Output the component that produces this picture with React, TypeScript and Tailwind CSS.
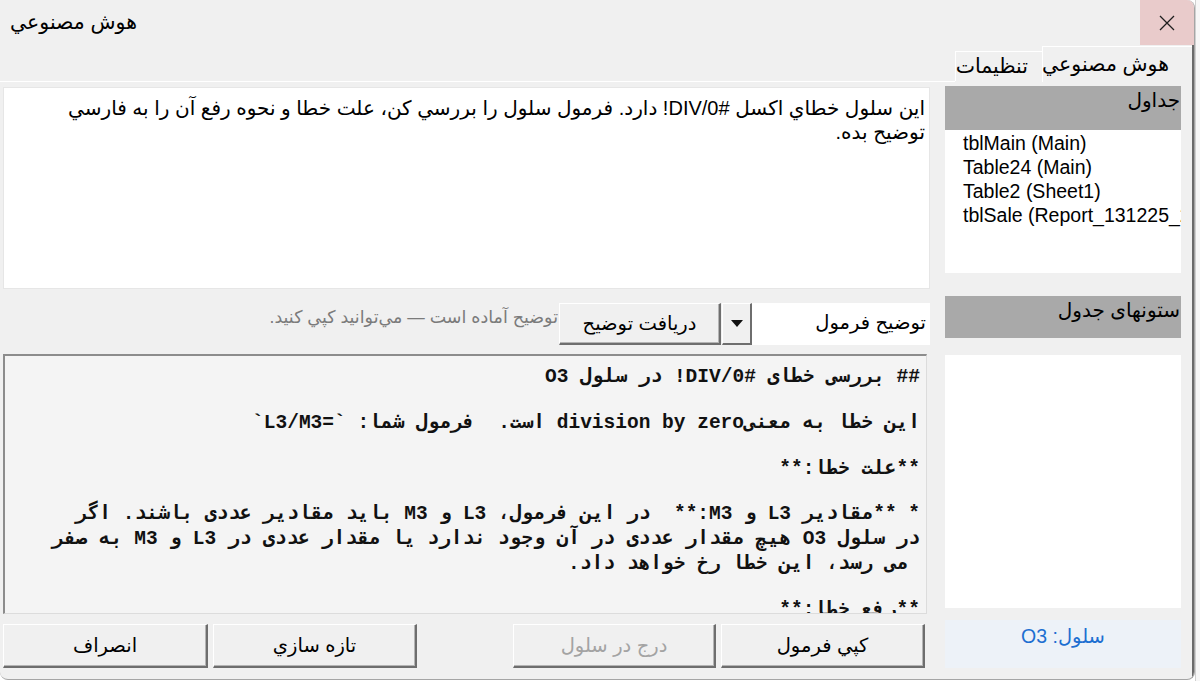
import React from "react";

const SANS = "font-['Liberation_Sans','DejaVu_Sans',sans-serif]";
const MONO = "font-['Liberation_Mono','DejaVu_Sans_Mono',monospace]";

const tables = [
  "tblMain (Main)",
  "Table24 (Main)",
  "Table2 (Sheet1)",
  "tblSale (Report_131225_2025)",
];

// matn-e khorooji, khat be khat (khat-e khali = "")
const output = [
  "## بررسی خطای #DIV/0! در سلول O3",
  "",
  "این خطا به معنیdivision by zero است.  فرمول شما: `=L3/M3`",
  "",
  "**علت خطا:**",
  "",
  "* **مقادیر L3 و M3:**  در این فرمول، L3 و M3 باید مقادیر عددی باشند. اگر",
  "در سلول O3 هیچ مقدار عددی در آن وجود ندارد یا مقدار عددی در L3 و M3 به صفر",
  " می رسد، این خطا رخ خواهد داد.",
  "",
  "**رفع خطا:**",
];

function Btn({
  label,
  disabled = false,
  className = "",
}: {
  label: string;
  disabled?: boolean;
  className?: string;
}) {
  return (
    <button
      dir="rtl"
      className={`flex items-center justify-center bg-[#f0f0f0] border-t border-l border-t-white border-l-white border-r-2 border-b-2 border-r-[#6e6e6e] border-b-[#6e6e6e] shadow-[inset_-1px_-1px_0_#b4b4b4] text-[19.5px] ${
        disabled ? "text-[#a3a3a3]" : "text-black"
      } ${className}`}
    >
      {label}
    </button>
  );
}

function CloseIcon() {
  return (
    <svg width="18" height="18" viewBox="0 0 18 18" fill="none">
      <path d="M2 2 L16 16 M16 2 L2 16" stroke="#1f1f1f" strokeWidth="1.3" />
    </svg>
  );
}

export default function App() {
  return (
    <div className={`w-[1200px] h-[681px] flex bg-white overflow-hidden ${SANS}`}>
      <div className="w-[1195px] h-[680px] shrink-0 flex flex-col bg-[#f0f0f0] border-r border-b border-[#a5a5a5] rounded-tr-[8px] rounded-br-[8px] rounded-bl-[8px] overflow-hidden">
        {/* title bar */}
        <div className="h-[45px] shrink-0 flex items-stretch justify-between">
          <div dir="rtl" className="pl-[10px] flex items-center text-[20.5px] text-black">
            هوش مصنوعي
          </div>
          <div className="w-[54px] bg-[#e9cbcb] flex items-center justify-center">
            <CloseIcon />
          </div>
        </div>

        {/* multipage */}
        <div className="flex-1 flex flex-col border-r-2 border-r-[#6b6b6b]">
          {/* tabs */}
          <div className="h-[37px] shrink-0 flex items-end">
            <div className="flex-1 h-full border-b border-white" />
            <div
              dir="rtl"
              className="w-[87px] h-[30px] mb-[1px] border-t border-l border-white flex items-center pr-[14px] text-[20.5px] text-black bg-[#f0f0f0] whitespace-nowrap"
            >
              تنظيمات
            </div>
            <div
              dir="rtl"
              className="w-[150px] h-[36px] border-t border-l border-white flex items-center pr-[23px] text-[20.5px] text-black bg-[#f0f0f0] whitespace-nowrap"
            >
              هوش مصنوعي
            </div>
          </div>

          {/* page */}
          <div className="flex-1 flex">
            {/* left column */}
            <div className="w-[927px] ml-[3px] pt-[5px] flex flex-col">
              <div
                dir="rtl"
                className="h-[202px] bg-white border border-[#e6e6e6] pr-[4px] pt-[8px] text-[20px] leading-[24px] text-black"
              >
                <div className="whitespace-nowrap">
                  این سلول خطاي اکسل #DIV/0! دارد. فرمول سلول را بررسي کن، علت خطا و نحوه رفع آن را به فارسي
                </div>
                <div>توضیح بده.</div>
              </div>

              {/* middle row */}
              <div className="mt-[14px] h-[42px] flex items-stretch">
                <div className="flex-1 flex items-start justify-end pt-[1px] pr-[1px] text-[17.5px] text-[#7b7b7b] whitespace-nowrap">
                  <span dir="rtl">توضیح آماده است — مي‌توانید کپي کنید.</span>
                </div>
                <Btn label="دریافت توضیح" className="w-[162px]" />
                <div className="w-[30px] ml-[1px] flex items-center justify-center bg-[#f0f0f0] border-t border-l border-white border-r-2 border-b-2 border-r-[#6e6e6e] border-b-[#6e6e6e]">
                  <svg width="12" height="8" viewBox="0 0 12 8">
                    <path d="M0 0 H12 L6 7 Z" fill="#111" />
                  </svg>
                </div>
                <div
                  dir="rtl"
                  className="w-[178px] bg-white flex items-center pr-[4px] pb-[2px] text-[19.5px] text-black"
                >
                  توضیح فرمول
                </div>
              </div>

              {/* output box */}
              <div
                dir="rtl"
                className={`mt-[9px] h-[260px] w-[924px] bg-[#f4f4f4] border-t-2 border-l-2 border-t-[#8c8c8c] border-l-[#8c8c8c] border-b border-r border-b-[#dcdcdc] border-r-[#dcdcdc] pr-[6px] pt-[9px] overflow-hidden ${MONO} font-bold text-[19.5px] text-[#111]`}
              >
                {output.map((line, i) =>
                  line === "" ? (
                    <div key={i} className="h-[20.75px]" />
                  ) : (
                    <div key={i} className="h-[25px] leading-[25px] whitespace-pre">
                      {line}
                    </div>
                  )
                )}
              </div>

              {/* buttons */}
              <div className="mt-[10px] h-[44px] flex">
                <Btn label="انصراف" className="w-[205px]" />
                <Btn label="تازه سازي" className="w-[204px] ml-[5px]" />
                <div className="w-[96px]" />
                <Btn label="درج در سلول" disabled className="w-[203px]" />
                <Btn label="کپي فرمول" className="w-[204px] ml-[5px]" />
              </div>
            </div>

            {/* right column */}
            <div className="w-[236px] ml-[15px] pt-[4px] flex flex-col">
              <div
                dir="rtl"
                className="h-[44px] bg-[#a9a9a9] pr-[1px] pt-[2px] text-[20px] leading-[24px] text-black"
              >
                جداول
              </div>
              <div className="h-[143px] bg-white pl-[18px] pt-[1px] overflow-hidden text-[19.5px] leading-[24px] text-black">
                {tables.map((t) => (
                  <div key={t} className="whitespace-nowrap">
                    {t}
                  </div>
                ))}
              </div>
              <div
                dir="rtl"
                className="mt-[23px] h-[42px] bg-[#a9a9a9] pr-[1px] pt-[2px] text-[20px] leading-[24px] text-black"
              >
                ستونهای جدول
              </div>
              <div className="mt-[17px] h-[253px] bg-white" />
              <div
                dir="rtl"
                className="mt-[12px] h-[48px] bg-[#edf2f8] flex items-center justify-center pb-[14px] text-[19.5px] text-[#1d6fd1]"
              >
                سلول: O3
              </div>
            </div>
          </div>
        </div>
      </div>
      <div className="flex-1 h-full bg-[#f7f7f7] border-l border-[#d0d0d0]" />
    </div>
  );
}
